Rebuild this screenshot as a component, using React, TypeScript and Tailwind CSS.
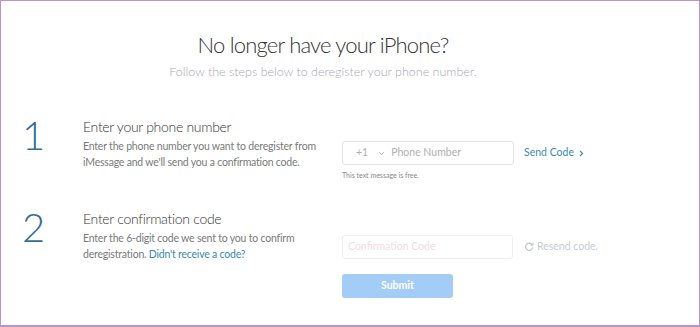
import React from "react";

export default function App() {
  return (
    <div className="w-[700px] h-[327px] bg-white border border-b-2 border-[#b994cc] overflow-hidden" style={{ fontFamily: "Lato, 'Open Sans', sans-serif" }}>
      <div className="flex flex-col items-center pt-[30px] pr-[54px]">
        <h1 className="text-[22px] font-light text-[#333] leading-[28px] tracking-[-0.8px]">No longer have your iPhone?</h1>
        <p className="text-[12.5px] text-[#a8a8b0] mt-[5px] leading-[16px] font-light">Follow the steps below to deregister your phone number.</p>
      </div>

      <div className="flex mt-[37px]">
        <div className="w-[82px] pl-[21px] text-[40px] font-light text-[#346f94] leading-[36px]">1</div>
        <div className="w-[259px]">
          <div className="text-[14px] text-[#333] leading-[20px] font-light tracking-[-0.3px]">Enter your phone number</div>
          <div className="text-[10.5px] text-[#7a7a7a] leading-[16px] mt-[1px] tracking-[-0.2px]">Enter the phone number you want to deregister from<br />iMessage and we'll send you a confirmation code.</div>
        </div>
        <div className="pt-[24px]">
          <div className="flex items-center">
            <div className="w-[172px] h-[24px] border border-[#e3e3e3] rounded-[3px] flex items-center text-[10.5px] text-[#b0b0b0]">
              <span className="ml-[13px]">+1</span>
              <svg className="ml-[10px]" width="7" height="5" viewBox="0 0 7 5"><path d="M1 1.2 L3.5 3.6 L6 1.2" stroke="#b5b5b5" strokeWidth="1" fill="none" /></svg>
              <span className="ml-[6px]">Phone Number</span>
            </div>
            <span className="ml-[10px] text-[10.5px] text-[#3a89b0] flex items-center">Send Code
              <svg className="ml-[5px]" width="5" height="7" viewBox="0 0 5 7"><path d="M1 1 L3.6 3.5 L1 6" stroke="#3a89b0" strokeWidth="1.1" fill="none" /></svg>
            </span>
          </div>
          <div className="text-[7px] text-[#888] mt-[5px]">This text message is free.</div>
        </div>
      </div>

      <div className="flex mt-[28px]">
        <div className="w-[82px] pl-[21px] text-[40px] font-light text-[#346f94] leading-[36px]">2</div>
        <div className="w-[259px]">
          <div className="text-[14px] text-[#333] leading-[20px] font-light tracking-[-0.3px]">Enter confirmation code</div>
          <div className="text-[10.5px] text-[#7a7a7a] leading-[16px] mt-[1px] tracking-[-0.2px]">Enter the 6-digit code we sent to you to confirm<br />deregistration. <span className="text-[#3a89b0]">Didn't receive a code?</span></div>
        </div>
        <div className="pt-[26px]">
          <div className="flex items-center">
            <div className="w-[171px] h-[24px] border border-[#f0eef2] rounded-[3px] flex items-center text-[10.5px] text-[#f1dbe6]">
              <span className="ml-[5px]">Confirmation Code</span>
            </div>
            <span className="ml-[12px] text-[10.5px] text-[#c5ccd4] flex items-center">
              <svg width="9" height="9" viewBox="0 0 10 10"><path d="M8 3 A4 4 0 1 0 8.6 6" stroke="#bcc4cc" strokeWidth="1.3" fill="none" /><path d="M8.8 0.8 L8.8 3.6 L6 3.6" stroke="#bcc4cc" strokeWidth="1.2" fill="none" /></svg>
              <span className="ml-[3px]">Resend code.</span>
            </span>
          </div>
          <button className="mt-[15px] w-[111px] h-[24px] rounded-[3px] bg-[#a3cdf6] text-white text-[10.5px] font-bold">Submit</button>
        </div>
      </div>
    </div>
  );
}
